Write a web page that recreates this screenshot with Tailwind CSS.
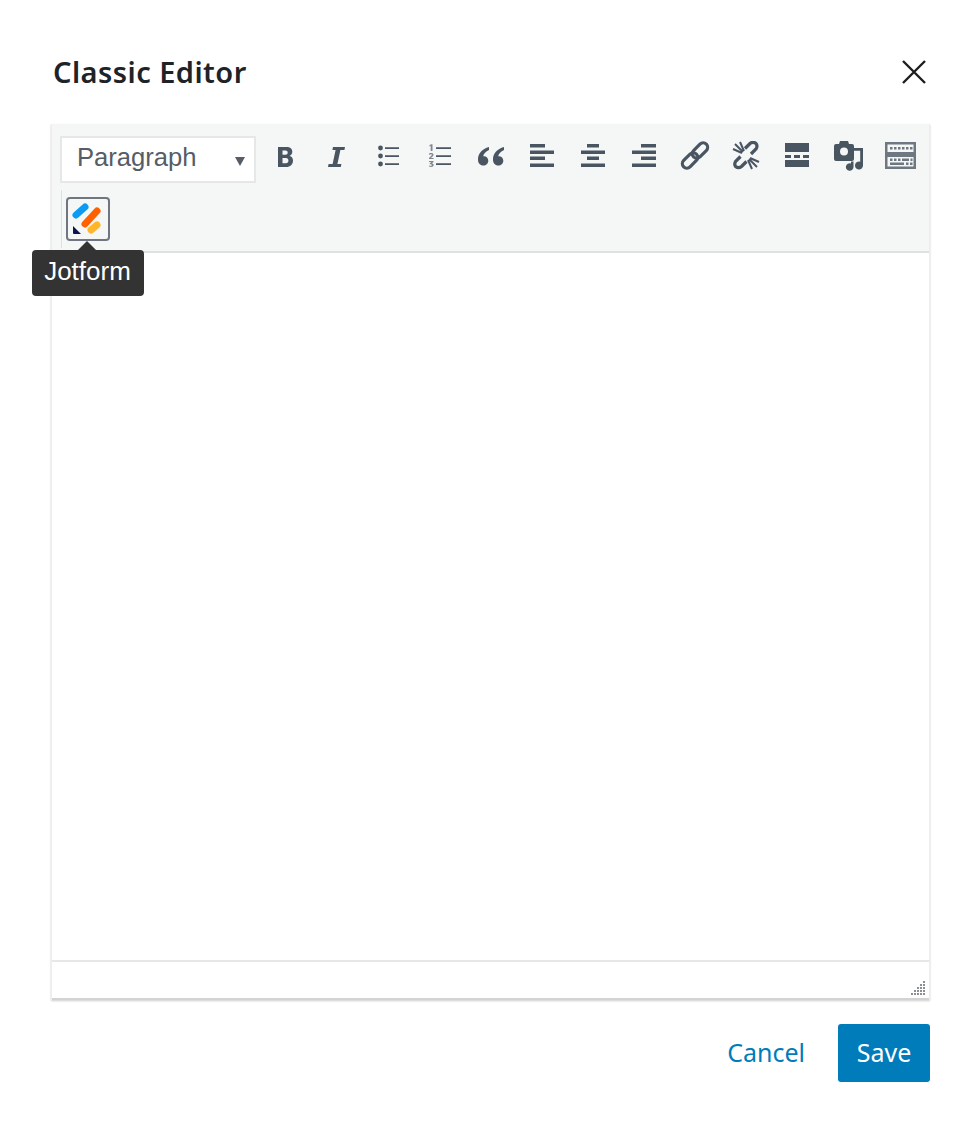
<!DOCTYPE html>
<html lang="en">
<head>
<meta charset="UTF-8">
<script src="https://cdn.jsdelivr.net/npm/@tailwindcss/browser@4"></script>
<title>Classic Editor</title>
</head>
<body class="bg-white font-['Noto_Sans',sans-serif]">
<div class="w-[979px] h-[1133px] pl-[51px] pr-[49px] pt-[50px] overflow-hidden">
    <!-- header -->
    <div class="flex justify-between items-center h-[44px] pl-[2px] pr-[1px]">
        <h1 class="text-[29px] tracking-[0.45px] leading-[44px] font-semibold text-[#1d2327]">Classic Editor</h1>
        <button class="w-[30px] h-[30px] text-[#1e1e1e]">
            <svg width="30" height="30" viewBox="0 0 30 30" fill="none" stroke="currentColor" stroke-width="2.4"><path d="M4 4l22 22M26 4L4 26"/></svg>
        </button>
    </div>

    <!-- editor -->
    <div class="relative mt-[30px] border-x border-[#eceeee] shadow-[0_1px_2px_rgba(0,0,0,0.2)]">
        <div class="bg-[#f5f6f6] h-[129px] pl-[8px] pt-[12px] border-b-2 border-[#dfe0e0]">
            <div class="flex items-start h-[48px]">
                <div class="w-[196px] h-[47px] bg-white border-2 border-[#e6e8e8] flex items-center justify-between pl-[15px] pr-[9px]">
                    <span class="font-['Liberation_Sans',sans-serif] text-[25.6px] text-[#555d66] -mt-[5px]">Paragraph</span>
                    <span class="w-0 h-0 border-x-[5px] border-x-transparent border-t-[9px] border-t-[#555d66] mt-[3px]"></span>
                </div>
                <div class="flex ml-[4px] mt-[5px] text-[#495561]">
                    <span class="w-[51.2px] flex justify-center">
                        <svg width="30" height="30" viewBox="0 0 30 30" fill="currentColor"><path fill-rule="evenodd" d="M7 6h8.500c3.800 0 5.800 1.800 5.800 4.800 0 2-1.100 3.500-2.800 4.100 2.300.5 3.500 2.200 3.500 4.600 0 4-2.800 6.500-6.800 6.500H7zm4.500 3.500v4.300h3c1.300 0 2.200-.8 2.200-2.200s-.9-2.100-2.200-2.100zm0 7.500v5.300h3.500c1.500 0 2.400-1 2.400-2.700s-.9-2.600-2.400-2.600z"/></svg>
                    </span>
                    <span class="w-[51.2px] flex justify-center">
                        <svg width="30" height="30" viewBox="0 0 30 30" fill="currentColor"><path d="M11 6h12l-.6 3h-4L15.400 23h4l-.6 3H6l.6-3h4L13.600 9h-3.200z"/></svg>
                    </span>
                    <span class="w-[51.2px] flex justify-center">
                        <svg width="30" height="30" viewBox="0 0 30 30" fill="currentColor"><circle cx="7.500" cy="7" r="2.400"/><circle cx="7.500" cy="15" r="2.400"/><circle cx="7.500" cy="23" r="2.400"/><path d="M12 6.200h14v1.700H12zM12 14.200h14v1.700H12zM12 22.200h14v1.700H12z"/></svg>
                    </span>
                    <span class="w-[51.2px] flex justify-center">
                        <svg width="30" height="30" viewBox="0 0 30 30" fill="currentColor"><path d="M12 6.200h15v1.700H12zM12 14.200h15v1.700H12zM12 22.200h15v1.700H12z"/><path fill="#7f8890" d="M5.500 4l2-.8h1V10H6.700V5l-1.200.4zM5 12.500c1.800-.8 4.500-.6 4.500 1.200 0 1.300-1.500 2.200-2.600 3.200h2.700V18H5v-1c1.300-1.300 2.800-2.300 2.800-3.200 0-.7-1.300-.6-2.800 0zM5 20h4.500v1l-1.600 1.300c1.200.2 1.800.9 1.800 1.800 0 2-2.800 2.300-4.700 1.500v-1.100c1.400.6 2.900.5 2.900-.4 0-.6-.8-.9-2.200-.8v-.9L7.200 21H5z"/></svg>
                    </span>
                    <span class="w-[51.2px] flex justify-center">
                        <svg class="overflow-visible" width="30" height="30" viewBox="0 0 30 30" fill="currentColor"><path d="M14 6C7 8 3 12.500 3 18.500 3 22 5 24.500 8.300 24.500c3 0 5-2.200 5-4.800 0-2.700-1.900-4.500-4.300-4.500-.3 0-.6 0-.8.1.6-2.700 2.600-4.900 5.800-6.300zM29 6c-7 2-11 6.500-11 12.500 0 3.500 2 6 5.300 6 3 0 5-2.200 5-4.800 0-2.700-1.900-4.500-4.300-4.500-.3 0-.6 0-.8.1.6-2.700 2.600-4.900 5.800-6.300z"/></svg>
                    </span>
                    <span class="w-[51.2px] flex justify-center">
                        <svg width="30" height="30" viewBox="0 0 30 30" fill="currentColor"><path d="M3 3h15v3.500H3zM3 9.500h24V13H3zM3 15.500h15V19H3zM3 22.500h24V26H3z"/></svg>
                    </span>
                    <span class="w-[51.2px] flex justify-center">
                        <svg width="30" height="30" viewBox="0 0 30 30" fill="currentColor"><path d="M9 3h12v3.500H9zM3 9.500h24V13H3zM9 15.500h12V19H9zM3 22.500h24V26H3z"/></svg>
                    </span>
                    <span class="w-[51.2px] flex justify-center">
                        <svg width="30" height="30" viewBox="0 0 30 30" fill="currentColor"><path d="M12 3h15v3.500H12zM3 9.500h24V13H3zM12 15.500h15V19H12zM3 22.500h24V26H3z"/></svg>
                    </span>
                    <span class="w-[51.2px] flex justify-center">
                        <svg width="30" height="30" viewBox="0 0 30 30" fill="none" stroke="currentColor" stroke-width="3.200"><g transform="rotate(-45 15 14.500)"><rect x="-1" y="10" width="18" height="9" rx="4.500"/><rect x="13" y="10" width="18" height="9" rx="4.500"/></g></svg>
                    </span>
                    <span class="w-[51.2px] flex justify-center">
                        <svg width="30" height="30" viewBox="0 0 30 30" fill="none" stroke="currentColor" stroke-width="3.200"><path d="M9.500 15.500l-5 5a4.800 4.800 0 0 0 0 5 4.800 4.800 0 0 0 6 0l5-5"/><path d="M20 13l5-5a4.800 4.800 0 0 0 0-5.500 4.800 4.800 0 0 0-6 0l-5 5"/><path stroke-width="2" d="M4 3l8 8M9 1l4 9M2 8l9 4M26 26l-8-8M21 28l-4-9M28 21l-9-4"/></svg>
                    </span>
                    <span class="w-[51.2px] flex justify-center">
                        <svg width="30" height="30" viewBox="0 0 30 30" fill="currentColor"><path d="M3 2h24v9H3zM3 19h24v7H3zM3 14h6v3H3zM12 14h6v3h-6zM21 14h6v3h-6z"/></svg>
                    </span>
                    <span class="w-[51.2px] flex justify-center">
                        <svg width="30" height="30" viewBox="0 0 30 30" fill="currentColor"><path fill-rule="evenodd" d="M2 3h3l1-3h8l1 3h3a2 2 0 0 1 2 2v13a2 2 0 0 1-2 2H2a2 2 0 0 1-2-2V5a2 2 0 0 1 2-2zm8 3.500a4 4 0 1 0 0 8 4 4 0 0 0 0-8z"/><path d="M17 20.500h2.500V26a3.800 3.800 0 1 1-2.500-3.500zM20 7h9v17.500a4 4 0 1 1-2.800-3.800V9.700H20z"/></svg>
                    </span>
                    <span class="w-[51.2px] flex justify-center">
                        <svg class="overflow-visible" width="30" height="30" viewBox="0 0 30 30" fill="#6f7880"><path fill-rule="evenodd" d="M0 1h31v12.500H0zm2.500 2.500v7.500h26V3.500zM0 13.500h31V28H0zm2.500 2.500v9.500h26V16z"/><path d="M5 6h2.500v2.500H5zM9 6h2.500v2.500H9zM13 6h2.500v2.500H13zM17 6h2.500v2.500H17zM21 6h2.500v2.500H21zM25 6h2.500v2.500H25zM5 17.500h2.500V20H5zM9 17.500h2.500V20H9zM13 17.500h2.500V20H13zM17 17.500h7V20h-7zM25.500 17.500h2V20h-2zM5 21.500h14V24H5zM21 21.500h2.500V24H21zM25 21.500h2.500V24H25z"/></svg>
                    </span>
                </div>
            </div>
            <div class="flex mt-[6px] h-[58px] border-l border-[#dfe0e0] ml-[1px]">
                <button class="w-[44px] h-[44px] ml-[4px] mt-[7px] bg-[#f5f6f6] border-2 border-[#6f7680] rounded-[4px] flex items-center justify-center">
                    <svg width="34" height="34" viewBox="0 0 34 34">
                        <path d="M5 13L14 5" stroke="#0a9cf5" stroke-width="7" stroke-linecap="round" fill="none"/>
                        <path d="M14 22L26 9" stroke="#ff6100" stroke-width="7" stroke-linecap="round" fill="none"/>
                        <path d="M20 28L26 23" stroke="#ffb629" stroke-width="7" stroke-linecap="round" fill="none"/>
                        <path d="M2 24l8 8H3a1 1 0 0 1-1-1z" fill="#0a1551"/>
                    </svg>
                </button>
            </div>
        </div>
        <!-- tooltip -->
        <div class="absolute left-[-20px] top-[117px] flex flex-col items-center w-[112px]">
            <div class="w-0 h-0 border-x-[9px] border-x-transparent border-b-[9px] border-b-[#333333] -ml-[2px]"></div>
            <div class="w-[112px] h-[46px] bg-[#333333] rounded-[4px] text-white text-[26px] leading-[43px] pr-[1px] text-center font-['Liberation_Sans',sans-serif]">Jotform</div>
        </div>
        <div class="h-[707px] bg-white"></div>
        <div class="relative h-[40px] bg-white border-y-2 border-t-[#e6e8e8] border-b-[#d2d4d4]">
            <svg class="absolute right-[2px] bottom-[1px]" width="18" height="18" viewBox="0 0 18 18" fill="#8c8f94">
                <path d="M14 2h2v2h-2zM11 5h2v2h-2zM14 5h2v2h-2zM8 8h2v2H8zM11 8h2v2h-2zM14 8h2v2h-2zM5 11h2v2H5zM8 11h2v2H8zM11 11h2v2h-2zM14 11h2v2h-2zM2 14h2v2H2zM5 14h2v2H5zM8 14h2v2H8zM11 14h2v2h-2zM14 14h2v2h-2z"/>
            </svg>
        </div>
    </div>

    <!-- footer -->
    <div class="flex justify-end items-center gap-[33px] mt-[24px]">
        <a class="text-[25px] text-[#007cba]">Cancel</a>
        <button class="w-[92px] h-[58px] bg-[#007cba] rounded-[3px] text-white text-[25px]">Save</button>
    </div>
</div>
</body>
</html>
